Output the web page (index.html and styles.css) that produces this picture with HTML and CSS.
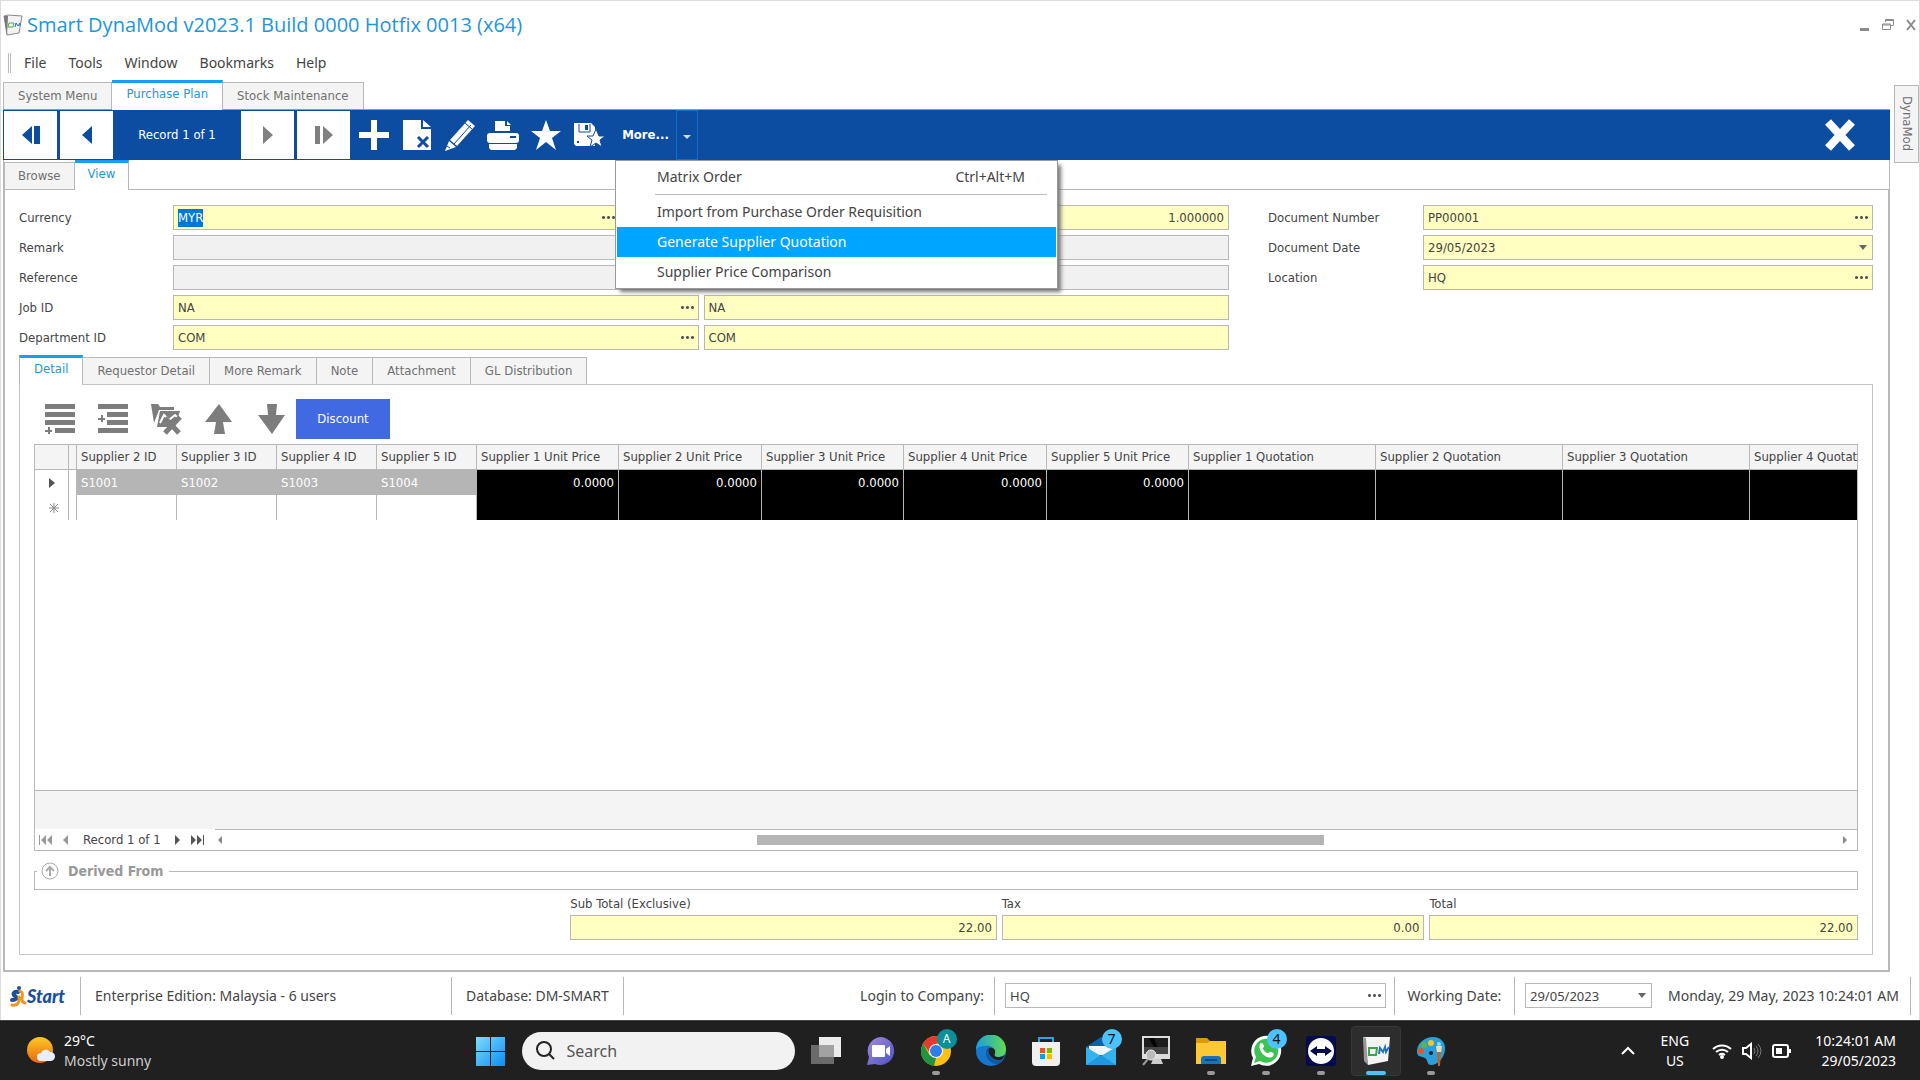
FILE: index.html
```html
<!DOCTYPE html>
<html lang="en">
<head>
  <meta charset="UTF-8" />
  <meta name="viewport" content="width=device-width, initial-scale=1.0"/>
  <title>Smart DynaMod</title>
  <link rel="stylesheet" href="styles.css">
</head>
<body>

  <div class="app">
    <header class="title-bar">
      <svg class="app-icon" width="20" height="22" viewBox="0 0 20 22"><path d="M1 2l4-1 14 1-3 17-12 2z" fill="#f3f3f3" stroke="#888"/><path d="M1 2l3 19 1-19z" fill="#777"/><path d="M6 9h5l-1 4H5z" fill="none" stroke="#4caf50"/><path d="M12 13l1-4 2 3 2-3v3" fill="none" stroke="#2b6cb0"/></svg>
      <h1>Smart DynaMod v2023.1 Build 0000 Hotfix 0013 (x64)</h1>
      <div class="window-controls">
        <button aria-label="Minimize"><svg width="12" height="14" viewBox="0 0 12 14"><path d="M1 11.500h9" stroke="#8a8a8a" stroke-width="3"/></svg></button>
        <button aria-label="Restore"><svg width="14" height="14" viewBox="0 0 14 14" fill="none" stroke="#8a8a8a"><path d="M4.500 4V1.500h8v6H9.500M4 2.500h9"/><path d="M1.500 6h8v5.500h-8zM1 7h9"/></svg></button>
        <button aria-label="Close"><svg width="12" height="12" viewBox="0 0 12 12"><path d="M2 1l8 10M10 1L2 11" stroke="#8a8a8a" stroke-width="2"/></svg></button>
      </div>
    </header>

    <nav class="menu-bar">
      <button>File</button>
      <button>Tools</button>
      <button>Window</button>
      <button>Bookmarks</button>
      <button>Help</button>
    </nav>

    <div class="workspace">
      <main class="document">
        <div class="tabs doc-tabs">
          <button class="tab">System Menu</button>
          <button class="tab active">Purchase Plan</button>
          <button class="tab">Stock Maintenance</button>
        </div>

        <div class="toolbar">
          <button class="nav-btn" aria-label="First"><svg width="20" height="20" viewBox="0 0 20 20" fill="#0c4da2"><path d="M11 1v18L1 10z"/><path d="M13 1h6v18h-6z"/></svg></button>
          <button class="nav-btn" aria-label="Previous"><svg width="10" height="20" viewBox="0 0 10 20" fill="#0c4da2"><path d="M10 1v18L0 10z"/></svg></button>
          <span class="record">Record 1 of 1</span>
          <button class="nav-btn" aria-label="Next"><svg width="10" height="20" viewBox="0 0 10 20" fill="#808080"><path d="M0 1v18l10-9z"/></svg></button>
          <button class="nav-btn" aria-label="Last"><svg width="20" height="20" viewBox="0 0 20 20" fill="#808080"><path d="M9 1v18l10-9z"/><path d="M1 1h5v18H1z"/></svg></button>
          <div class="tools">
            <button aria-label="Add"><svg width="32" height="32" viewBox="0 0 32 32"><path d="M13 1h6v12h12v6H19v12h-6V19H1v-6h12z" fill="#fff"/></svg></button>
            <button aria-label="Delete"><svg width="32" height="32" viewBox="0 0 32 32"><path d="M2 1h18v9h10v21H2z" fill="#fff"/><path d="M22 1l8 7h-8z" fill="#fff"/><path d="M17 18l10 10M27 18L17 28" stroke="#0c4da2" stroke-width="3"/></svg></button>
            <button aria-label="Edit"><svg width="32" height="32" viewBox="0 0 32 32"><path d="M24 1l7 6-18 20-7-6z" fill="#fff"/><path d="M5 22l7 6-11 4z" fill="#fff"/><path d="M10 25L27 6M21 4l7 6" stroke="#0c4da2" stroke-width="1" fill="none"/><path d="M3 27l3 2" stroke="#0c4da2"/></svg></button>
            <button aria-label="Print"><svg width="32" height="32" viewBox="0 0 32 32" fill="#fff"><path d="M8 12V2h10v5h5v5z"/><path d="M20 2l4 4h-4z"/><rect x="0" y="14" width="32" height="10" rx="3"/><path d="M2 25h28v4l-2 2H4l-2-2z"/><path d="M23 18h6" stroke="#0c4da2" stroke-width="2"/></svg></button>
            <button aria-label="Bookmark"><svg width="32" height="32" viewBox="0 0 32 32" fill="#fff"><path d="M16 1l4 11h11l-9 7 4 12-10-8-10 8 4-12-9-7h11z"/></svg></button>
            <button aria-label="Save layout"><svg width="32" height="32" viewBox="0 0 32 32"><path d="M1 4h17l4 4v19H3l-2-2z" fill="#fff"/><path d="M6 5v8h11V5" fill="none" stroke="#0c4da2"/><path d="M12 6h3v5h-3zM4 22h2v2H4z" fill="#0c4da2"/><path d="M23 10l3 7h6l-5 4 2 7-6-4-6 4 2-7-5-4h6z" fill="#fff" stroke="#0c4da2"/></svg></button>
          </div>
          <div class="more">
            <button class="more-btn">More...</button>
            <button class="more-drop" aria-label="More actions"><span class="caret"></span></button>
            <div class="dropdown">
              <button class="item"><span>Matrix Order</span><span>Ctrl+Alt+M</span></button>
              <hr>
              <button class="item">Import from Purchase Order Requisition</button>
              <button class="item hot">Generate Supplier Quotation</button>
              <button class="item">Supplier Price Comparison</button>
            </div>
          </div>
          <button class="close-doc" aria-label="Close document"><svg width="32" height="32" viewBox="0 0 32 32"><path d="M4 3l24 26M28 3L4 29" stroke="#fff" stroke-width="8"/></svg></button>
        </div>

        <div class="tabs view-tabs">
          <button class="tab">Browse</button>
          <button class="tab active">View</button>
        </div>

        <section class="view">
          <form class="form">
            <div class="form-left">
              <label for="currency">Currency</label>
              <div class="pair pair-currency">
                <div class="field"><input id="currency" value="MYR"><button type="button" class="dots" aria-label="Pick currency"></button></div>
                <div class="field"><input class="num" aria-label="Exchange rate" value="1.000000"></div>
              </div>
              <label for="remark">Remark</label>
              <div class="field plain"><input id="remark"></div>
              <label for="reference">Reference</label>
              <div class="field plain"><input id="reference"></div>
              <label for="job">Job ID</label>
              <div class="pair">
                <div class="field"><input id="job" value="NA"><button type="button" class="dots" aria-label="Pick job"></button></div>
                <div class="field"><input aria-label="Job name" value="NA"></div>
              </div>
              <label for="dept">Department ID</label>
              <div class="pair">
                <div class="field"><input id="dept" value="COM"><button type="button" class="dots" aria-label="Pick department"></button></div>
                <div class="field"><input aria-label="Department name" value="COM"></div>
              </div>
            </div>
            <div class="form-right">
              <label for="docno">Document Number</label>
              <div class="field"><input id="docno" value="PP00001"><button type="button" class="dots" aria-label="Pick document"></button></div>
              <label for="docdate">Document Date</label>
              <div class="field drop"><select id="docdate"><option>29/05/2023</option></select></div>
              <label for="location">Location</label>
              <div class="field"><input id="location" value="HQ"><button type="button" class="dots" aria-label="Pick location"></button></div>
            </div>
          </form>

          <div class="tabs detail-tabs">
            <button class="tab active">Detail</button>
            <button class="tab">Requestor Detail</button>
            <button class="tab">More Remark</button>
            <button class="tab">Note</button>
            <button class="tab">Attachment</button>
            <button class="tab">GL Distribution</button>
          </div>

          <div class="detail">
            <div class="row-tools">
              <button aria-label="Append row"><svg width="32" height="32" viewBox="0 0 32 32" fill="#7d7d7d"><path d="M1 1h30v5H1zM1 9h30v5H1zM1 17h30v5H1zM11 25h20v5H11zM1 27h7v2H1z"/><path d="M4 24h2v7H4z"/></svg></button>
              <button aria-label="Insert row"><svg width="32" height="32" viewBox="0 0 32 32" fill="#7d7d7d"><path d="M1 1h30v5H1zM10 9h21v5H10zM10 17h21v5H10zM1 25h30v5H1zM1 15h7v2H1z"/><path d="M4 12h2v7H4z"/></svg></button>
              <button aria-label="Delete row"><svg width="32" height="32" viewBox="0 0 32 32"><path d="M1 1h7l2 3h14v3H9L4 20z" fill="#7d7d7d"/><path d="M10 8h20l-5 16H7z" fill="#7d7d7d"/><path d="M10 20l4-8 5 5 6-5 4 4" stroke="#fff" stroke-width="2" fill="none"/><path d="M15 15l14 15M30 14L15 30" stroke="#7d7d7d" stroke-width="5"/></svg></button>
              <button aria-label="Move up"><svg width="32" height="32" viewBox="0 0 32 32" fill="#7d7d7d"><path d="M16 1l13 18h-9l2 12H11l2-12H2z"/></svg></button>
              <button aria-label="Move down"><svg width="32" height="32" viewBox="0 0 32 32" fill="#7d7d7d"><path d="M16 31l13-19h-9l1-11H11l1 11H2z"/></svg></button>
              <button class="discount">Discount</button>
            </div>

            <div class="grid">
              <div class="grid-view">
                <table>
                  <colgroup>
                    <col class="c-mark"><col class="c-fix">
                    <col class="c-id"><col class="c-id"><col class="c-id"><col class="c-id">
                    <col class="c-price"><col class="c-price"><col class="c-price"><col class="c-price"><col class="c-price">
                    <col class="c-quote"><col class="c-quote"><col class="c-quote"><col class="c-quote">
                  </colgroup>
                  <thead>
                    <tr>
                      <th></th><th></th>
                      <th>Supplier 2 ID</th><th>Supplier 3 ID</th><th>Supplier 4 ID</th><th>Supplier 5 ID</th>
                      <th>Supplier 1 Unit Price</th><th>Supplier 2 Unit Price</th><th>Supplier 3 Unit Price</th><th>Supplier 4 Unit Price</th><th>Supplier 5 Unit Price</th>
                      <th>Supplier 1 Quotation</th><th>Supplier 2 Quotation</th><th>Supplier 3 Quotation</th><th>Supplier 4 Quotation</th>
                    </tr>
                  </thead>
                  <tbody>
                    <tr class="current">
                      <td class="mark"><svg width="6" height="10" viewBox="0 0 6 10"><path d="M0 0v10l6-5z" fill="#555"/></svg></td><td class="fix"></td>
                      <td class="id">S1001</td><td class="id">S1002</td><td class="id">S1003</td><td class="id">S1004</td>
                      <td class="dark">0.0000</td><td class="dark">0.0000</td><td class="dark">0.0000</td><td class="dark">0.0000</td><td class="dark">0.0000</td>
                      <td class="dark"></td><td class="dark"></td><td class="dark"></td><td class="dark"></td>
                    </tr>
                    <tr>
                      <td class="mark"><svg width="10" height="10" viewBox="0 0 10 10"><path d="M5 0v10M0 5h10M1 1l8 8M9 1L1 9" stroke="#888"/></svg></td><td class="fix"></td>
                      <td></td><td></td><td></td><td></td>
                      <td class="dark"></td><td class="dark"></td><td class="dark"></td><td class="dark"></td><td class="dark"></td>
                      <td class="dark"></td><td class="dark"></td><td class="dark"></td><td class="dark"></td>
                    </tr>
                  </tbody>
                </table>
              </div>
              <div class="grid-summary"></div>
              <div class="grid-nav">
                <button aria-label="First record"><svg width="14" height="10" viewBox="0 0 14 10" fill="#999"><path d="M0 0h1v10H0zM7 0v10L2 5zM13 0v10L8 5z"/></svg></button>
                <button aria-label="Previous record"><svg width="6" height="10" viewBox="0 0 6 10" fill="#999"><path d="M5 0v10L0 5z"/></svg></button>
                <span>Record 1 of 1</span>
                <button aria-label="Next record"><svg width="6" height="10" viewBox="0 0 6 10" fill="#555"><path d="M0 0v10l5-5z"/></svg></button>
                <button aria-label="Last record"><svg width="14" height="10" viewBox="0 0 14 10" fill="#555"><path d="M12 0h1v10h-1zM0 0v10l5-5zM6 0v10l5-5z"/></svg></button>
                <div class="scroll">
                  <button aria-label="Scroll left"><svg width="5" height="8" viewBox="0 0 5 8" fill="#888"><path d="M4 0v8L0 4z"/></svg></button>
                  <div class="track"><div class="thumb"></div></div>
                  <button aria-label="Scroll right"><svg width="5" height="8" viewBox="0 0 5 8" fill="#888"><path d="M0 0v8l4-4z"/></svg></button>
                </div>
              </div>
            </div>

            <fieldset class="derived">
              <legend><svg width="18" height="18" viewBox="0 0 18 18" fill="none" stroke="#aaa"><circle cx="9" cy="9" r="8"/><path d="M9 14V5M5 9l4-4 4 4" stroke-width="2"/></svg>Derived From</legend>
            </fieldset>

            <div class="totals">
              <div><label for="sub">Sub Total (Exclusive)</label><div class="field"><input id="sub" class="num" value="22.00"></div></div>
              <div><label for="tax">Tax</label><div class="field"><input id="tax" class="num" value="0.00"></div></div>
              <div><label for="total">Total</label><div class="field"><input id="total" class="num" value="22.00"></div></div>
            </div>
          </div>
        </section>
      </main>

      <aside class="dock"><button>DynaMod</button></aside>
    </div>

    <footer class="status-bar">
      <button class="start"><svg width="18" height="22" viewBox="0 0 18 22" fill="none" stroke-linecap="round"><path d="M9 7c-4-1-6 2-3 4s1 4-3 4" stroke="#1a4f9c" stroke-width="4"/><path d="M11 6c4 2 2 4 2 7s0 4 3 5M3 20c5 1 8-2 7-8" stroke="#f39322" stroke-width="3"/><circle cx="10" cy="3" r="2" fill="#1a4f9c"/></svg>Start</button>
      <span class="edition">Enterprise Edition: Malaysia - 6 users</span>
      <span class="database">Database: DM-SMART</span>
      <label class="login" for="company">Login to Company:</label>
      <div class="cell company"><div class="field white"><input id="company" value="HQ"><button class="dots" aria-label="Pick company"></button></div></div>
      <label class="working" for="workdate">Working Date:</label>
      <div class="cell workdate"><div class="field white drop"><select id="workdate"><option>29/05/2023</option></select></div></div>
      <span class="now">Monday, 29 May, 2023 10:24:01 AM</span>
    </footer>
  </div>

  <div class="taskbar">
    <button class="weather">
      <svg width="30" height="30" viewBox="0 0 30 30"><defs><linearGradient id="sun" x1="0" y1="0" x2="0" y2="1"><stop offset="0" stop-color="#fdc828"/><stop offset="1" stop-color="#e8690b"/></linearGradient></defs><circle cx="14" cy="14" r="13" fill="url(#sun)"/><path d="M15 25a4 4 0 010-8 5 5 0 019-1 4 4 0 011 9z" fill="#e8eefb"/></svg>
      <span>29°C<br><em>Mostly sunny</em></span>
    </button>

    <div class="task-icons">
      <button class="task" aria-label="Start menu"><svg width="32" height="32" viewBox="0 0 32 32"><defs><linearGradient id="win" x1="0" y1="0" x2="1" y2="1"><stop offset="0" stop-color="#7fdcfb"/><stop offset="1" stop-color="#0a8df5"/></linearGradient></defs><path d="M2 2h14v14H2zM17 2h14v14H17zM2 17h14v14H2zM17 17h14v14H17z" fill="url(#win)"/></svg></button>
      <div class="search">
        <svg width="20" height="20" viewBox="0 0 20 20" fill="none" stroke="#222" stroke-width="2"><circle cx="9" cy="8" r="7"/><path d="M14 13l5 5"/></svg>
        <input type="text" placeholder="Search" aria-label="Search">
      </div>
      <button class="task" aria-label="Task view"><svg width="32" height="32" viewBox="0 0 32 32"><path d="M9 2h22v20H9z" fill="#ececec"/><path d="M1 10h23v19H1z" fill="#6b6b6b"/><path d="M9 10h15v12H9z" fill="#a2a2a2"/></svg></button>
      <button class="task" aria-label="Chat"><svg width="32" height="32" viewBox="0 0 32 32"><defs><linearGradient id="chat" x1="0" y1="0" x2="1" y2="1"><stop offset="0" stop-color="#a58bd8"/><stop offset="1" stop-color="#4b53c6"/></linearGradient></defs><path d="M16 2a14 14 0 11-6 27l-8 1 2-8A14 14 0 0116 2z" fill="url(#chat)"/><rect x="7" y="10" width="13" height="12" rx="1" fill="#fff"/><path d="M21 14l4-3v10l-4-3z" fill="#fff"/></svg></button>
      <button class="task running" aria-label="Chrome"><svg width="32" height="32" viewBox="0 0 32 32"><circle cx="16" cy="16" r="15" fill="#fbc116"/><path d="M3 8.500A15 15 0 0129 8.500H16l-5 11z" fill="#e33b2e"/><path d="M3 8.500l6.500 11.500L16 23l-2 8A15 15 0 013 8.500z" fill="#229342"/><circle cx="16" cy="16" r="7" fill="#fff"/><circle cx="16" cy="16" r="6" fill="#2f7de9"/></svg><span class="badge teal">A</span></button>
      <button class="task" aria-label="Edge"><svg width="32" height="32" viewBox="0 0 32 32"><defs><linearGradient id="edge" x1="0" y1="0" x2="1" y2="0"><stop offset="0" stop-color="#1b9de2"/><stop offset="1" stop-color="#63dc4b"/></linearGradient></defs><circle cx="16" cy="16" r="15" fill="#1478cf"/><path d="M1 15A15 15 0 0131 14c0 6-4 8-8 8-5 0-4-2-3-4 1-5-5-8-10-7-5 0-8 2-9 4z" fill="url(#edge)"/><path d="M14 12c-7 6-1 17 9 17 2-1 4-2 5-4-9 3-17-3-14-13z" fill="#0c59a4"/><path d="M14 13c4-1 7 2 6 5s0 4 4 4c3 0 4-1 6-2-1 4-4 6-8 5-6-1-10-7-8-12z" fill="#202020"/></svg></button>
      <button class="task" aria-label="Store"><svg width="32" height="32" viewBox="0 0 32 32"><path d="M9 8V3h14v5" fill="none" stroke="#2aa7e0" stroke-width="2"/><path d="M2 7h28v20a4 4 0 01-4 4H6a4 4 0 01-4-4z" fill="#f0f0f0"/><path d="M10 13h5v5h-5z" fill="#f25022"/><path d="M17 13h5v5h-5z" fill="#7fba00"/><path d="M10 19h5v5h-5z" fill="#00a4ef"/><path d="M17 19h5v5h-5z" fill="#ffb900"/></svg></button>
      <button class="task" aria-label="Mail"><svg width="32" height="32" viewBox="0 0 32 32"><path d="M1 12L16 2l15 10v8H1z" fill="#0f5fb0"/><path d="M4 11h24v9H4z" fill="#f2f6fb"/><path d="M1 12l15 9 15-9v18H1z" fill="#35b3ee"/><path d="M1 30l15-10 15 10z" fill="#2197dd"/></svg><span class="badge">7</span></button>
      <button class="task" aria-label="Remote viewer"><svg width="32" height="32" viewBox="0 0 32 32"><path d="M2 1h28v23H2z" fill="#ddd"/><path d="M4 3h24v16H4z" fill="#1c1c1c"/><path d="M9 3h5l4 11h-3z" fill="#000"/><path d="M4 12h24v7H4z" fill="#444"/><path d="M13 24h8l2 5H11z" fill="#ccc"/><circle cx="11" cy="20" r="5" fill="#bbb" stroke="#eee"/><path d="M8 24l-5 6" stroke="#999" stroke-width="2"/></svg></button>
      <button class="task running" aria-label="File Explorer"><svg width="32" height="32" viewBox="0 0 32 32"><path d="M1 3h11l3 3v6H1z" fill="#d99a0b"/><path d="M1 8h11l3-2h16v23H1z" fill="#fcc934"/><path d="M6 29v-5a3 3 0 013-3h14a3 3 0 013 3v5z" fill="#1a73b8"/><path d="M10 25h12" stroke="#0b4d83" stroke-width="2"/></svg></button>
      <button class="task running" aria-label="WhatsApp"><svg width="32" height="32" viewBox="0 0 32 32"><path d="M1 31l2-8A15 15 0 119 29z" fill="#fff"/><path d="M4 28l2-6a12 12 0 114 4z" fill="#3cc352"/><path d="M10 9c2-2 3-1 4 2 0 2-2 2-1 3 1 2 3 4 5 4 1 0 2-2 3-1 4 1 3 3 1 5-5 3-15-6-12-13z" fill="#fff"/></svg><span class="badge">4</span></button>
      <button class="task running" aria-label="TeamViewer"><svg width="32" height="32" viewBox="0 0 32 32"><rect x="1" y="1" width="30" height="30" rx="3" fill="#050a4e"/><circle cx="16" cy="16" r="13" fill="#fff"/><path d="M5 16l7-5v3h8v-3l7 5-7 5v-3h-8v3z" fill="#050a4e"/></svg></button>
      <button class="task current" aria-label="DynaMod"><svg width="32" height="32" viewBox="0 0 32 32"><path d="M3 2l5 28 20-4 2-24z" fill="#f4f4f4"/><path d="M3 2l3 1 2 27-4-4z" fill="#999"/><path d="M9 13h8l-1 7H9z" fill="none" stroke="#3aa648" stroke-width="2"/><path d="M19 19l1-6 3 4 2-5 1 5 3-5" fill="none" stroke="#2573bd" stroke-width="2"/></svg></button>
      <button class="task running" aria-label="Paint"><svg width="32" height="32" viewBox="0 0 32 32"><path d="M18 2c8 0 13 6 12 13-1 8-7 15-14 15-4 0-3-4-5-6-2-3-8-1-9-6C1 9 9 2 18 2z" fill="#2a9fdc"/><circle cx="16" cy="8" r="3" fill="#f5c52c"/><circle cx="9" cy="10" r="3" fill="#58b947"/><circle cx="6" cy="16" r="3" fill="#e2572b"/><circle cx="24" cy="9" r="2" fill="#8edcf5"/><circle cx="16" cy="18" r="2" fill="#123"/><path d="M21 11h6l-1 7h-4z" fill="#eed9b8"/><path d="M22 17h4l-1 14h-2z" fill="#b2692b"/></svg></button>
    </div>

    <div class="tray">
      <button aria-label="Hidden icons"><svg width="14" height="10" viewBox="0 0 14 10" fill="none" stroke="#fff" stroke-width="2"><path d="M1 8l6-6 6 6"/></svg></button>
      <span class="lang">ENG<br>US</span>
      <div class="tray-icons">
        <svg width="20" height="18" viewBox="0 0 20 18" fill="none" stroke="#fff" stroke-width="2"><path d="M1 7a13 13 0 0118 0M4 10a9 9 0 0112 0M7 13a5 5 0 016 0"/><circle cx="10" cy="15" r="1" fill="#fff"/></svg>
        <svg width="20" height="18" viewBox="0 0 20 18" fill="none" stroke="#fff"><path d="M1 6h3l5-4v14l-5-4H1z" stroke-width="2"/><path d="M12 6q2 3 0 6M14 4q4 5 0 10M16 2q6 7 0 14" stroke="#777"/></svg>
        <svg width="20" height="18" viewBox="0 0 20 18"><rect x="1" y="3" width="15" height="12" rx="2" fill="none" stroke="#fff" stroke-width="2"/><path d="M4 6h6v6H4zM17 7h2v4h-2z" fill="#fff"/></svg>
      </div>
      <span class="clock">10:24:01 AM<br>29/05/2023</span>
    </div>
  </div>

  <script>
    const currency = document.getElementById("currency");
    currency.focus();
    currency.select();
  </script>

</body>
</html>
```
FILE: styles.css
```css
* {
  box-sizing: border-box;
}

body {
  margin: 0;
  min-height: 100vh;
  display: flex;
  flex-direction: column;
  background: #fff;
  color: #444;
  font-family: "DejaVu Sans Condensed", "DejaVu Sans", sans-serif;
  font-size: 13px;
  line-height: 18px;
}

button, input, select {
  font: inherit;
  color: inherit;
  border: none;
  background: none;
  padding: 0;
  margin: 0;
  border-radius: 0;
  outline: none;
  white-space: nowrap;
}

svg {
  display: block;
  flex: none;
}

.app {
  flex: 1;
  display: flex;
  flex-direction: column;
  border: 1px solid #ddd;
  border-bottom: none;
}

/* title + menu */
.title-bar {
  display: flex;
  align-items: center;
  height: 48px;
  padding: 0 2px;
  gap: 4px;
}

.title-bar h1 {
  margin: 0;
  font-family: "Open Sans", sans-serif;
  font-size: 20px;
  font-weight: normal;
  color: #1e96d8;
}

.window-controls {
  margin-left: auto;
  display: flex;
  align-items: center;
  gap: 10px;
}

.menu-bar {
  display: flex;
  align-items: center;
  gap: 22px;
  height: 20px;
  margin: 4px 0 7px 7px;
  padding-left: 13px;
  border-left: 3px double #bbb;
  font-family: "Noto Sans", sans-serif;
  font-size: 14px;
}

/* main area */
.workspace {
  flex: 1;
  display: flex;
}

.document {
  flex: 1;
  min-width: 0;
  display: flex;
  flex-direction: column;
  margin-left: 2px;
}

.dock {
  width: 29px;
  padding: 5px 0 0 4px;
}

.dock button {
  height: 78px;
  width: 25px;
  writing-mode: vertical-rl;
  border: 1px solid #b8b8b8;
  background: #f4f4f4;
  color: #707070;
}

.tabs {
  display: flex;
  align-items: flex-end;
  height: 29px;
  flex: none;
}

.tab {
  height: 27px;
  padding: 0 14px;
  border: 1px solid #b8b8b8;
  border-width: 1px 1px 0 0;
  background: #f4f4f4;
  color: #707070;
}

.tab:first-child {
  border-left-width: 1px;
}

/* sits over the top border of the panel below */
.tab.active {
  position: relative;
  height: 30px;
  margin-bottom: -1px;
  padding-bottom: 5px;
  border-top: 3px solid #12a0f0;
  background: #fff;
  color: #1e96d8;
}

.toolbar {
  display: flex;
  align-items: center;
  flex: none;
  height: 51px;
  border-top: 1px solid #999;
  padding-left: 1px;
  background: #0c4da2;
  color: #fff;
}

.nav-btn {
  width: 53px;
  height: 48px;
  background: #fff;
  display: flex;
  align-items: center;
  justify-content: center;
}

.nav-btn + .nav-btn {
  margin-left: 3px;
}

.record {
  width: 128px;
  text-align: center;
}

.tools {
  display: flex;
  gap: 11px;
  margin-left: 8px;
}

.more {
  position: relative;
  display: flex;
  height: 50px;
  margin-left: 10px;
}

.more-btn {
  width: 61px;
  font-weight: bold;
}

.more-drop {
  width: 22px;
  border: 1px solid #0f6fd0;
}

.caret {
  display: inline-block;
  border: 4px solid transparent;
  border-top-color: #cde;
  border-bottom: none;
}

.dropdown {
  position: absolute;
  top: 50px;
  left: 0;
  z-index: 10;
  width: 443px;
  padding: 1px;
  background: #fff;
  border: 1px solid #999;
  box-shadow: 4px 4px 4px -1px #777;
  font-family: "Noto Sans", sans-serif;
  font-size: 14px;
  color: #444;
}

.dropdown .item {
  width: 100%;
  height: 30px;
  padding: 0 31px 0 40px;
  display: flex;
  align-items: center;
  justify-content: space-between;
}

.dropdown .item.hot {
  background: #00a5ff;
  color: #fff;
}

.dropdown hr {
  margin: 2px 9px;
  border: none;
  border-top: 1px solid #bbb;
  margin-left: 38px;
}

.close-doc {
  margin-left: auto;
  margin-right: 34px;
}

.view-tabs {
  border-left: 1px solid #b8b8b8;
  border-right: 1px solid #b8b8b8;
}

.view-tabs .tab {
  padding: 0 13px;
}

.view-tabs .tab.active {
  padding-bottom: 5px;
}

.view {
  flex: 1;
  display: flex;
  flex-direction: column;
  border: 2px solid #b8b8b8;
  border-top-width: 1px;
  padding: 15px 15px 15px 14px;
}

/* header form */
.form {
  display: flex;
  gap: 39px;
  align-items: flex-start;
}

.form-left, .form-right {
  display: grid;
  row-gap: 5px;
  align-items: center;
}

.form-left {
  flex: 1210;
  grid-template-columns: 154px 1fr;
}

.form-right {
  flex: 605;
  grid-template-columns: 155px 1fr;
}

.pair {
  display: grid;
  grid-template-columns: 1fr 1fr;
  gap: 5px;
}

.pair-currency {
  grid-template-columns: 447fr 604fr;
}

.field {
  display: flex;
  min-width: 0;
  height: 25px;
  border: 1px solid #b8b8b0;
  background: #ffffc2;
}

.field.plain {
  background: #f1f1f1;
  border-color: #b8b8b8;
}

.field.white {
  background: #fff;
  border-color: #b8b8b8;
}

.field input, .field select {
  flex: 1;
  min-width: 0;
  width: 100%;
  padding: 0 4px;
  appearance: none;
}

.field .num {
  text-align: right;
}

.field input::selection {
  background: #0078d7;
  color: #fff;
}

.dots {
  width: 22px;
  background: radial-gradient(circle, #555 1px, transparent 2px) 4px center / 5px 5px repeat-x;
  background-clip: content-box;
  padding: 0 3px;
}

.drop {
  position: relative;
}

.drop::after {
  content: "";
  position: absolute;
  right: 5px;
  top: 9px;
  border: 4px solid transparent;
  border-top: 5px solid #666;
  border-bottom: none;
}

/* detail tab */
.detail-tabs {
  margin-top: 5px;
}

.detail {
  flex: 1;
  display: flex;
  flex-direction: column;
  border: 1px solid #c4c4c4;
  padding: 14px;
}

.row-tools {
  display: flex;
  align-items: center;
  gap: 21px;
  height: 40px;
  padding-left: 10px;
}

.discount {
  width: 94px;
  height: 40px;
  margin-left: -13px;
  background: #4169e1;
  color: #fff;
}

.grid {
  flex: 1;
  display: flex;
  flex-direction: column;
  margin-top: 5px;
  border: 1px solid #b8b8b8;
}

.grid-view {
  flex: 1;
  overflow: hidden;
}

.grid table {
  table-layout: fixed;
  width: 1902px;
  border-collapse: separate;
  border-spacing: 0;
}

.c-mark { width: 34px; }
.c-fix { width: 8px; }
.c-id { width: 100px; }
.c-price { width: 142px; }
.c-price:nth-child(even) { width: 143px; }
.c-quote { width: 187px; }

.grid th, .grid td {
  height: 25px;
  padding: 0 4px;
  border-right: 1px solid #b8b8b8;
  text-align: left;
  font-weight: normal;
  white-space: nowrap;
}

.grid th {
  background: #f4f4f4;
  border-bottom: 1px solid #b8b8b8;
}

.grid td.mark {
  padding-left: 14px;
}

.grid .current .id {
  background: #b5b5b5;
  border-color: #b5b5b5;
  color: #fff;
}

.grid td.dark {
  background: #000;
  color: #fff;
  text-align: right;
}

.grid-summary {
  height: 39px;
  background: #f4f4f4;
  border-top: 1px solid #b8b8b8;
}

.grid-nav {
  display: flex;
  align-items: center;
  gap: 10px;
  height: 21px;
  padding-left: 4px;
}

.grid-nav > span {
  margin: 0 4px;
}

.scroll {
  flex: 1;
  display: flex;
  align-items: center;
  align-self: stretch;
  border-top: 1px solid #b8b8b8;
  padding: 0 9px 0 3px;
}

.track {
  flex: 1;
}

.thumb {
  width: 35%;
  height: 10px;
  margin-left: 33%;
  background: #b5b5b5;
}

.derived {
  height: 28px;
  margin: 11px 0 5px;
  padding: 0;
  border: 1px solid #b8b8b8;
}

.derived legend {
  display: flex;
  align-items: center;
  gap: 9px;
  height: 18px;
  margin-left: 2px;
  padding: 0 6px 0 4px;
  color: #999;
  font-size: 14px;
  font-weight: bold;
}

.totals {
  display: grid;
  grid-template-columns: 426fr 422fr 428fr;
  gap: 5px;
  padding-left: 29.4%;
}

.totals label {
  display: block;
  height: 20px;
}

/* status bar */
.status-bar {
  display: flex;
  align-items: center;
  height: 48px;
  padding-right: 8px;
  font-family: "Noto Sans", sans-serif;
  font-size: 14px;
}

.status-bar > * {
  height: 38px;
  line-height: 38px;
  border-right: 1px solid #b8b8b8;
}

.start {
  width: 80px;
  display: flex;
  align-items: center;
  padding-left: 8px;
  color: #1a4f9c;
  font-family: Lato, sans-serif;
  font-size: 18px;
  font-weight: 900;
  font-style: italic;
}

.edition {
  width: 371px;
  padding-left: 14px;
}

.database {
  width: 172px;
  padding-left: 14px;
}

.login {
  flex: 1;
  text-align: right;
  padding-right: 10px;
}

.cell {
  padding: 6px 8px 6px 10px;
  line-height: 18px;
  font-size: 13px;
}

.company {
  width: 400px;
}

.working {
  width: 120px;
  text-align: center;
}

.workdate {
  width: 145px;
  border-right: none;
}

.now {
  width: 251px;
  padding-left: 8px;
}

/* taskbar */
.taskbar {
  display: grid;
  grid-template-columns: 1fr auto 1fr;
  align-items: center;
  height: 60px;
  background: #202020;
  border-top: 1px solid #444;
  color: #fff;
  font-family: "Noto Sans", sans-serif;
  font-size: 14px;
  line-height: 20px;
}

.weather {
  display: flex;
  align-items: center;
  gap: 8px;
  padding-left: 26px;
  text-align: left;
}

.weather em {
  font-style: normal;
  color: #ccc;
}

.task-icons {
  display: flex;
  align-items: center;
  gap: 5px;
}

.task {
  position: relative;
  width: 50px;
  height: 50px;
  display: flex;
  align-items: center;
  justify-content: center;
  border-radius: 4px;
}

.task.running::after, .task.current::after {
  content: "";
  position: absolute;
  bottom: 1px;
  left: 21px;
  width: 8px;
  height: 4px;
  border-radius: 2px;
  background: #999;
}

.task.current {
  background: #2d2d2d;
  border: 1px solid #383838;
}

.task.current::after {
  left: 14px;
  bottom: 0;
  width: 20px;
  background: #4cc2ff;
}

.badge {
  position: absolute;
  top: 3px;
  right: 4px;
  width: 20px;
  height: 20px;
  border-radius: 10px;
  background: #4cc2ff;
  color: #111;
  text-align: center;
}

.badge.teal {
  background: #0b8f9b;
  color: #fff;
  font-size: 12px;
}

.search {
  display: flex;
  align-items: center;
  gap: 12px;
  width: 273px;
  height: 38px;
  margin: 0 1px 0 2px;
  padding-left: 13px;
  border-radius: 19px;
  background: #f2f2f2;
}

.search input {
  width: 180px;
  font-size: 16px;
  color: #333;
}

.search input::placeholder {
  color: #555;
}

.tray {
  justify-self: end;
  display: flex;
  align-items: center;
  padding-right: 24px;
}

.lang {
  margin: 0 23px 0 26px;
  text-align: center;
}

.tray-icons {
  display: flex;
  gap: 10px;
  margin-right: 23px;
}

.clock {
  text-align: right;
}
```
